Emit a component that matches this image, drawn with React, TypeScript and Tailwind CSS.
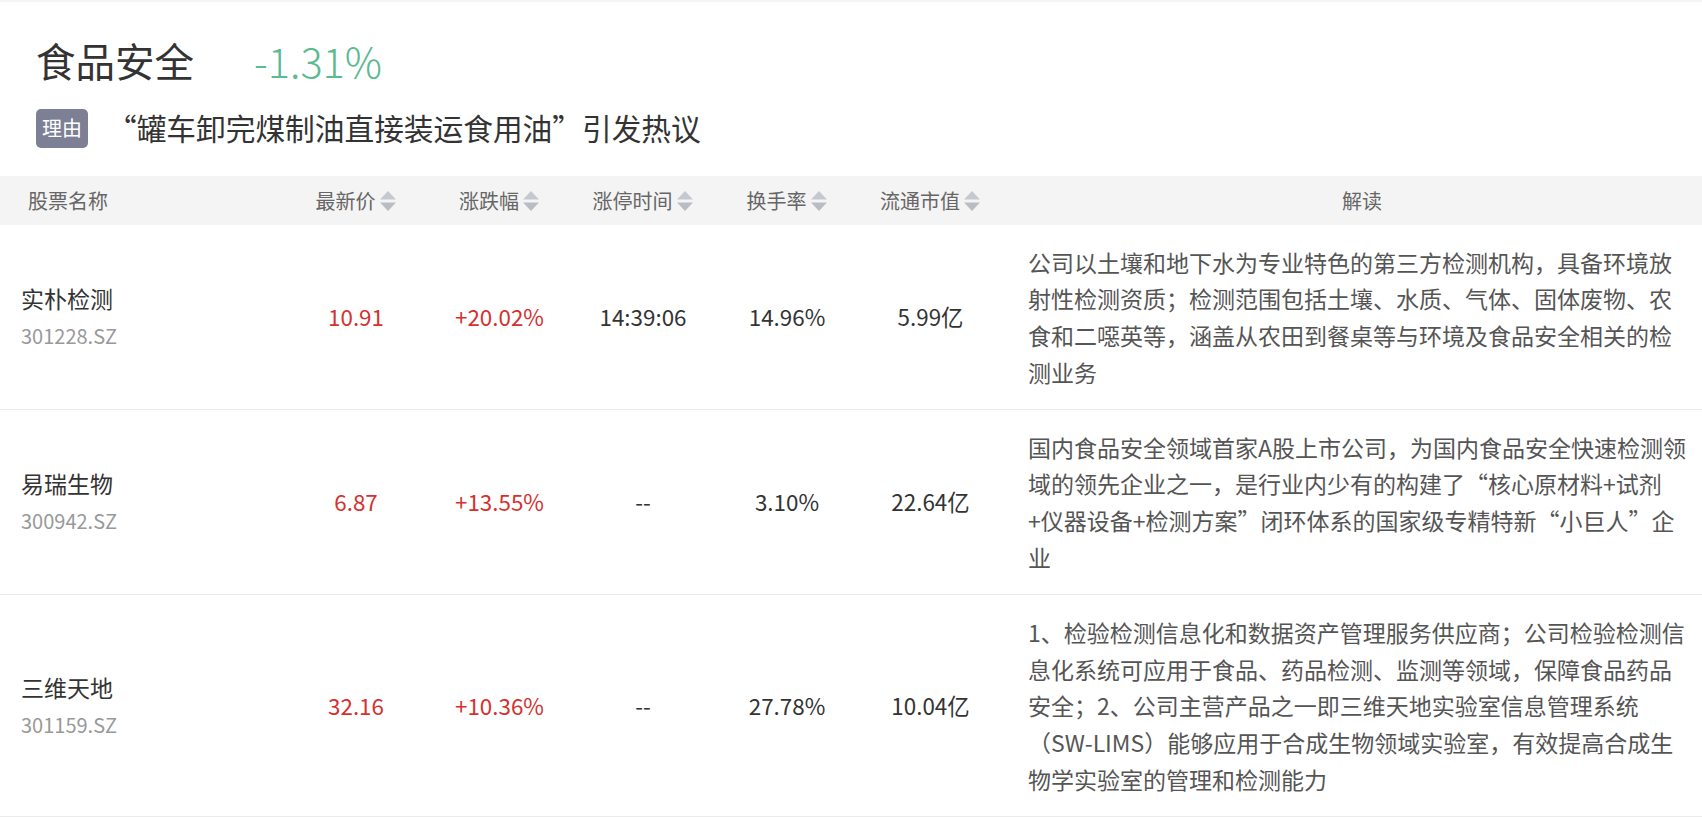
const rows = [
  {
    name: "实朴检测",
    code: "301228.SZ",
    price: "10.91",
    change: "+20.02%",
    time: "14:39:06",
    turnover: "14.96%",
    cap: "5.99亿",
    desc: "公司以土壤和地下水为专业特色的第三方检测机构，具备环境放射性检测资质；检测范围包括土壤、水质、气体、固体废物、农食和二噁英等，涵盖从农田到餐桌等与环境及食品安全相关的检测业务",
  },
  {
    name: "易瑞生物",
    code: "300942.SZ",
    price: "6.87",
    change: "+13.55%",
    time: "--",
    turnover: "3.10%",
    cap: "22.64亿",
    desc: "国内食品安全领域首家A股上市公司，为国内食品安全快速检测领域的领先企业之一，是行业内少有的构建了“核心原材料+试剂+仪器设备+检测方案”闭环体系的国家级专精特新“小巨人”企业",
  },
  {
    name: "三维天地",
    code: "301159.SZ",
    price: "32.16",
    change: "+10.36%",
    time: "--",
    turnover: "27.78%",
    cap: "10.04亿",
    desc: "1、检验检测信息化和数据资产管理服务供应商；公司检验检测信息化系统可应用于食品、药品检测、监测等领域，保障食品药品安全；2、公司主营产品之一即三维天地实验室信息管理系统（SW-LIMS）能够应用于合成生物领域实验室，有效提高合成生物学实验室的管理和检测能力",
  },
];

const SortIcon = () => (
  <svg width="18" height="22" viewBox="0 0 18 22" className="ml-[3px] shrink-0">
    <polygon points="1,9.5 9,1 17,9.5" fill="#c6c8cf" />
    <polygon points="1,12.5 17,12.5 9,21" fill="#b9bcc4" />
  </svg>
);

const SortHead = ({ label }: { label: string }) => (
  <div className="flex items-center justify-center">
    <span>{label}</span>
    <SortIcon />
  </div>
);

const grid = "grid grid-cols-[284px_144px_143px_144px_144px_143px_1fr]";

export default function App() {
  return (
    <div className="min-h-screen bg-white border-t-2 border-[#f4f4f4] font-['Noto_Sans_CJK_SC',sans-serif] text-[#333]">
      <div className="pl-[36px] pt-[30px]">
        <div className="flex items-center h-[56px]">
          <span className="text-[39.5px] leading-[56px] text-[#333]">食品安全</span>
          <span className="ml-[60px] text-[41.5px] leading-[56px] font-light text-[#5bba90]">-1.31%</span>
        </div>
        <div className="mt-[20px] flex items-center h-[40px]">
          <span className="flex items-center justify-center w-[52px] h-[39px] rounded-[5px] bg-[#7d8094] text-white text-[20px] leading-none">
            理由
          </span>
          <span className="ml-[19px] text-[29.7px] leading-[40px] text-[#333]">
            “罐车卸完煤制油直接装运食用油”引发热议
          </span>
        </div>
      </div>

      <div className="mt-[28px]">
        <div className={`${grid} h-[49px] items-center bg-[#f4f4f4] text-[20px] text-[#666]`}>
          <div className="pl-[28px]">股票名称</div>
          <SortHead label="最新价" />
          <SortHead label="涨跌幅" />
          <SortHead label="涨停时间" />
          <SortHead label="换手率" />
          <SortHead label="流通市值" />
          <div className="pl-[20px] text-center">解读</div>
        </div>

        {rows.map((r) => (
          <div key={r.code} className={`${grid} items-center border-b border-[#ebebeb]`}>
            <div className="pl-[21px]">
              <div className="text-[23px] leading-[38px] text-[#333]">{r.name}</div>
              <div className="text-[20px] leading-[38px] text-[#999]">{r.code}</div>
            </div>
            <div className="text-center text-[22.4px] text-[#d4312f]">{r.price}</div>
            <div className="text-center text-[22.4px] text-[#d4312f]">{r.change}</div>
            <div className="text-center text-[22.4px] text-[#333]">{r.time}</div>
            <div className="text-center text-[22.4px] text-[#333]">{r.turnover}</div>
            <div className="text-center text-[22.4px] text-[#333]">{r.cap}</div>
            <div className="pl-[26px] py-[18.5px]">
              <p className="w-[660px] text-[23px] leading-[1.6] text-[#555]">{r.desc}</p>
            </div>
          </div>
        ))}
      </div>
    </div>
  );
}
